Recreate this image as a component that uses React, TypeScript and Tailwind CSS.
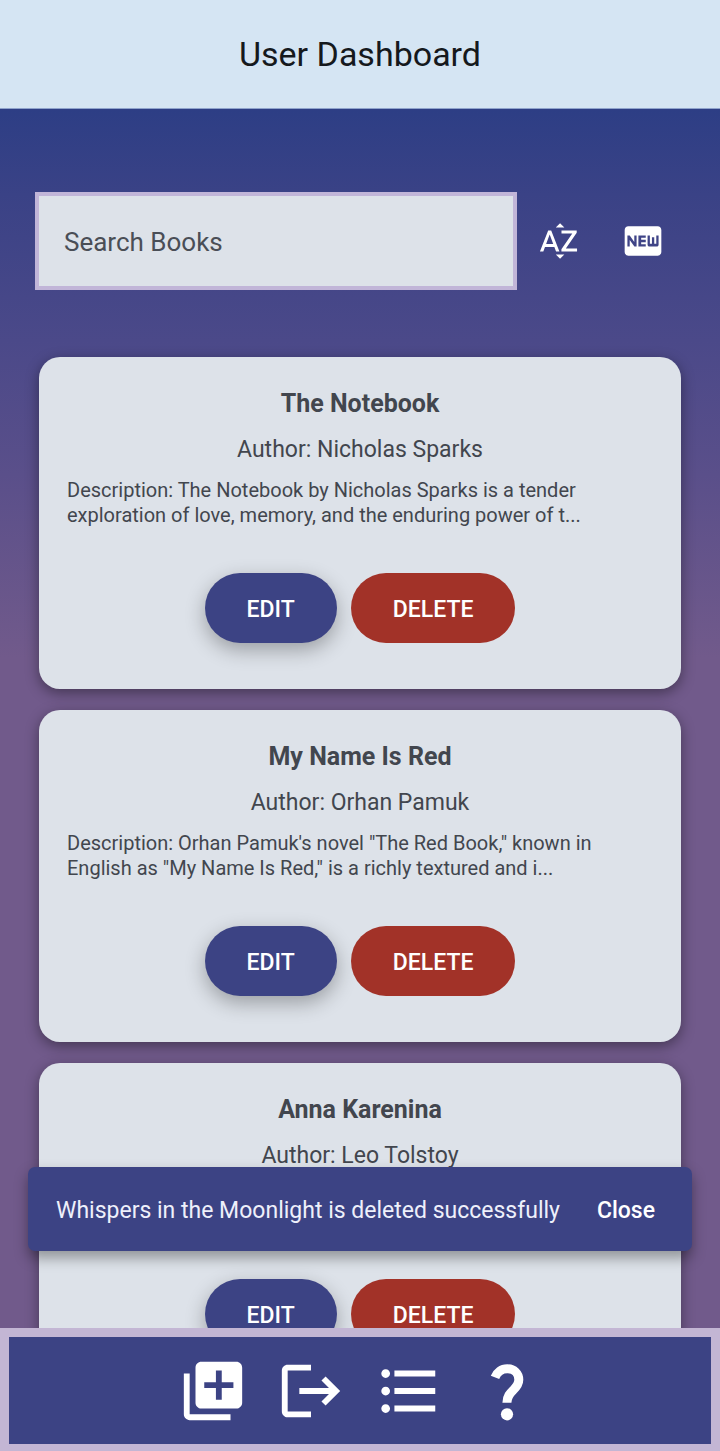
import { useState } from "react";
import {
  MdFiberNew,
  MdFormatListBulleted,
  MdLibraryAdd,
  MdLogout,
  MdSortByAlpha,
} from "react-icons/md";

type Book = { title: string; author: string; description: string };

const books: Book[] = [
  {
    title: "The Notebook",
    author: "Nicholas Sparks",
    description:
      "The Notebook by Nicholas Sparks is a tender exploration of love, memory, and the enduring power of t...",
  },
  {
    title: "My Name Is Red",
    author: "Orhan Pamuk",
    description:
      'Orhan Pamuk\'s novel "The Red Book," known in English as "My Name Is Red," is a richly textured and i...',
  },
  {
    title: "Anna Karenina",
    author: "Leo Tolstoy",
    description:
      "Anna Karenina by Leo Tolstoy is a sweeping story of love, family, and society in imperial Russia a...",
  },
];

function QuestionIcon({ size }: { size: number }) {
  return (
    <svg width={size} height={size} viewBox="0 0 70 70" fill="none" aria-hidden="true">
      <path
        d="M23 21.4C25 16.2 29.5 12.8 35.3 12.8C42 12.8 46.8 17.4 46.8 23.8C46.8 34 34.9 34.5 34.9 46.8"
        stroke="currentColor"
        strokeWidth="9"
      />
      <circle cx="35" cy="58.3" r="6.1" fill="currentColor" />
    </svg>
  );
}

const navItems = [
  { label: "Add book", Icon: MdLibraryAdd },
  { label: "Log out", Icon: MdLogout },
  { label: "My list", Icon: MdFormatListBulleted },
  { label: "Help", Icon: QuestionIcon },
];

function BookCard({ book }: { book: Book }) {
  return (
    <article className="rounded-[21px] bg-[#dde2e9] px-7 pt-[29px] pb-[46px] text-[#42464e] shadow-[0_4px_14px_rgba(0,0,0,0.4)]">
      <h2 className="text-center text-[25px] leading-9 font-bold">{book.title}</h2>
      <p className="mt-3.5 text-center text-[23px] leading-7">{`Author: ${book.author}`}</p>
      <p className="mt-3.5 line-clamp-2 pr-4 text-[20px] leading-[25px]">{`Description: ${book.description}`}</p>
      <div className="mt-[45px] flex justify-center gap-3.5">
        <button
          type="button"
          className="h-[70px] rounded-full bg-[#3c4384] px-[42px] pt-1 text-[23px] font-medium text-white shadow-[0_7px_20px_rgba(0,0,0,0.3)]"
        >
          EDIT
        </button>
        <button
          type="button"
          className="h-[70px] rounded-full bg-[#a23228] px-[42px] pt-1 text-[23px] font-medium text-white"
        >
          DELETE
        </button>
      </div>
    </article>
  );
}

export default function App() {
  const [query, setQuery] = useState("");
  const [showNotice, setShowNotice] = useState(true);

  return (
    <div className="flex h-screen flex-col bg-[#3c4384] font-[Roboto,sans-serif]">
      <header className="flex h-[109px] shrink-0 items-center justify-center border-b border-[#8fa3cc] bg-[#d5e5f3]">
        <h1 className="text-[34px] leading-10 text-[#15191d]">User Dashboard</h1>
      </header>

      <div className="relative min-h-0 flex-1">
        <main className="h-full overflow-hidden bg-linear-[180deg,#2d3e85_0%,#3a4286_7%,#4b4989_19%,#5a4f8a_30%,#715a8b_45%,#715a8b_100%]">
          <div className="flex items-center px-[35px] pt-[83px]">
            <input
              type="text"
              aria-label="Search Books"
              placeholder="Search Books"
              value={query}
              onChange={(event) => setQuery(event.target.value)}
              className="h-[98px] min-w-0 flex-1 border-4 border-[#c1b5d8] bg-[#dde2e9] px-[25px] pt-0.5 text-[26px] text-[#42464e] outline-none placeholder:text-[#4a4e56] placeholder:opacity-100"
            />
            <button type="button" aria-label="Sort alphabetically" className="flex h-[84px] w-[84px] items-center justify-center text-white">
              <MdSortByAlpha size={44} />
            </button>
            <button type="button" aria-label="Newest first" className="flex h-[84px] w-[84px] items-center justify-center text-white">
              <MdFiberNew size={44} />
            </button>
          </div>
          <div className="mt-[67px] flex flex-col gap-[21px] px-[39px]">
            {books.map((book) => (
              <BookCard key={book.title} book={book} />
            ))}
          </div>
        </main>

        {showNotice && (
          <div
            role="status"
            className="absolute inset-x-7 bottom-[77px] flex h-[84px] items-center justify-between rounded-[7px] bg-[#3c4384] pt-1 pr-[37px] pl-7 text-[23px] text-[#eef0fb] shadow-[0_7px_14px_rgba(0,0,0,0.35)]"
          >
            <span>Whispers in the Moonlight is deleted successfully</span>
            <button type="button" onClick={() => setShowNotice(false)} className="font-medium text-white">
              Close
            </button>
          </div>
        )}
      </div>

      <nav className="flex h-[123px] shrink-0 items-center justify-center gap-7 border-x-[9px] border-t-[9px] border-b-[7px] border-[#c3b6d4] bg-[#3c4384]">
        {navItems.map(({ label, Icon }) => (
          <button key={label} type="button" aria-label={label} className="text-white">
            <Icon size={70} />
          </button>
        ))}
      </nav>
    </div>
  );
}
